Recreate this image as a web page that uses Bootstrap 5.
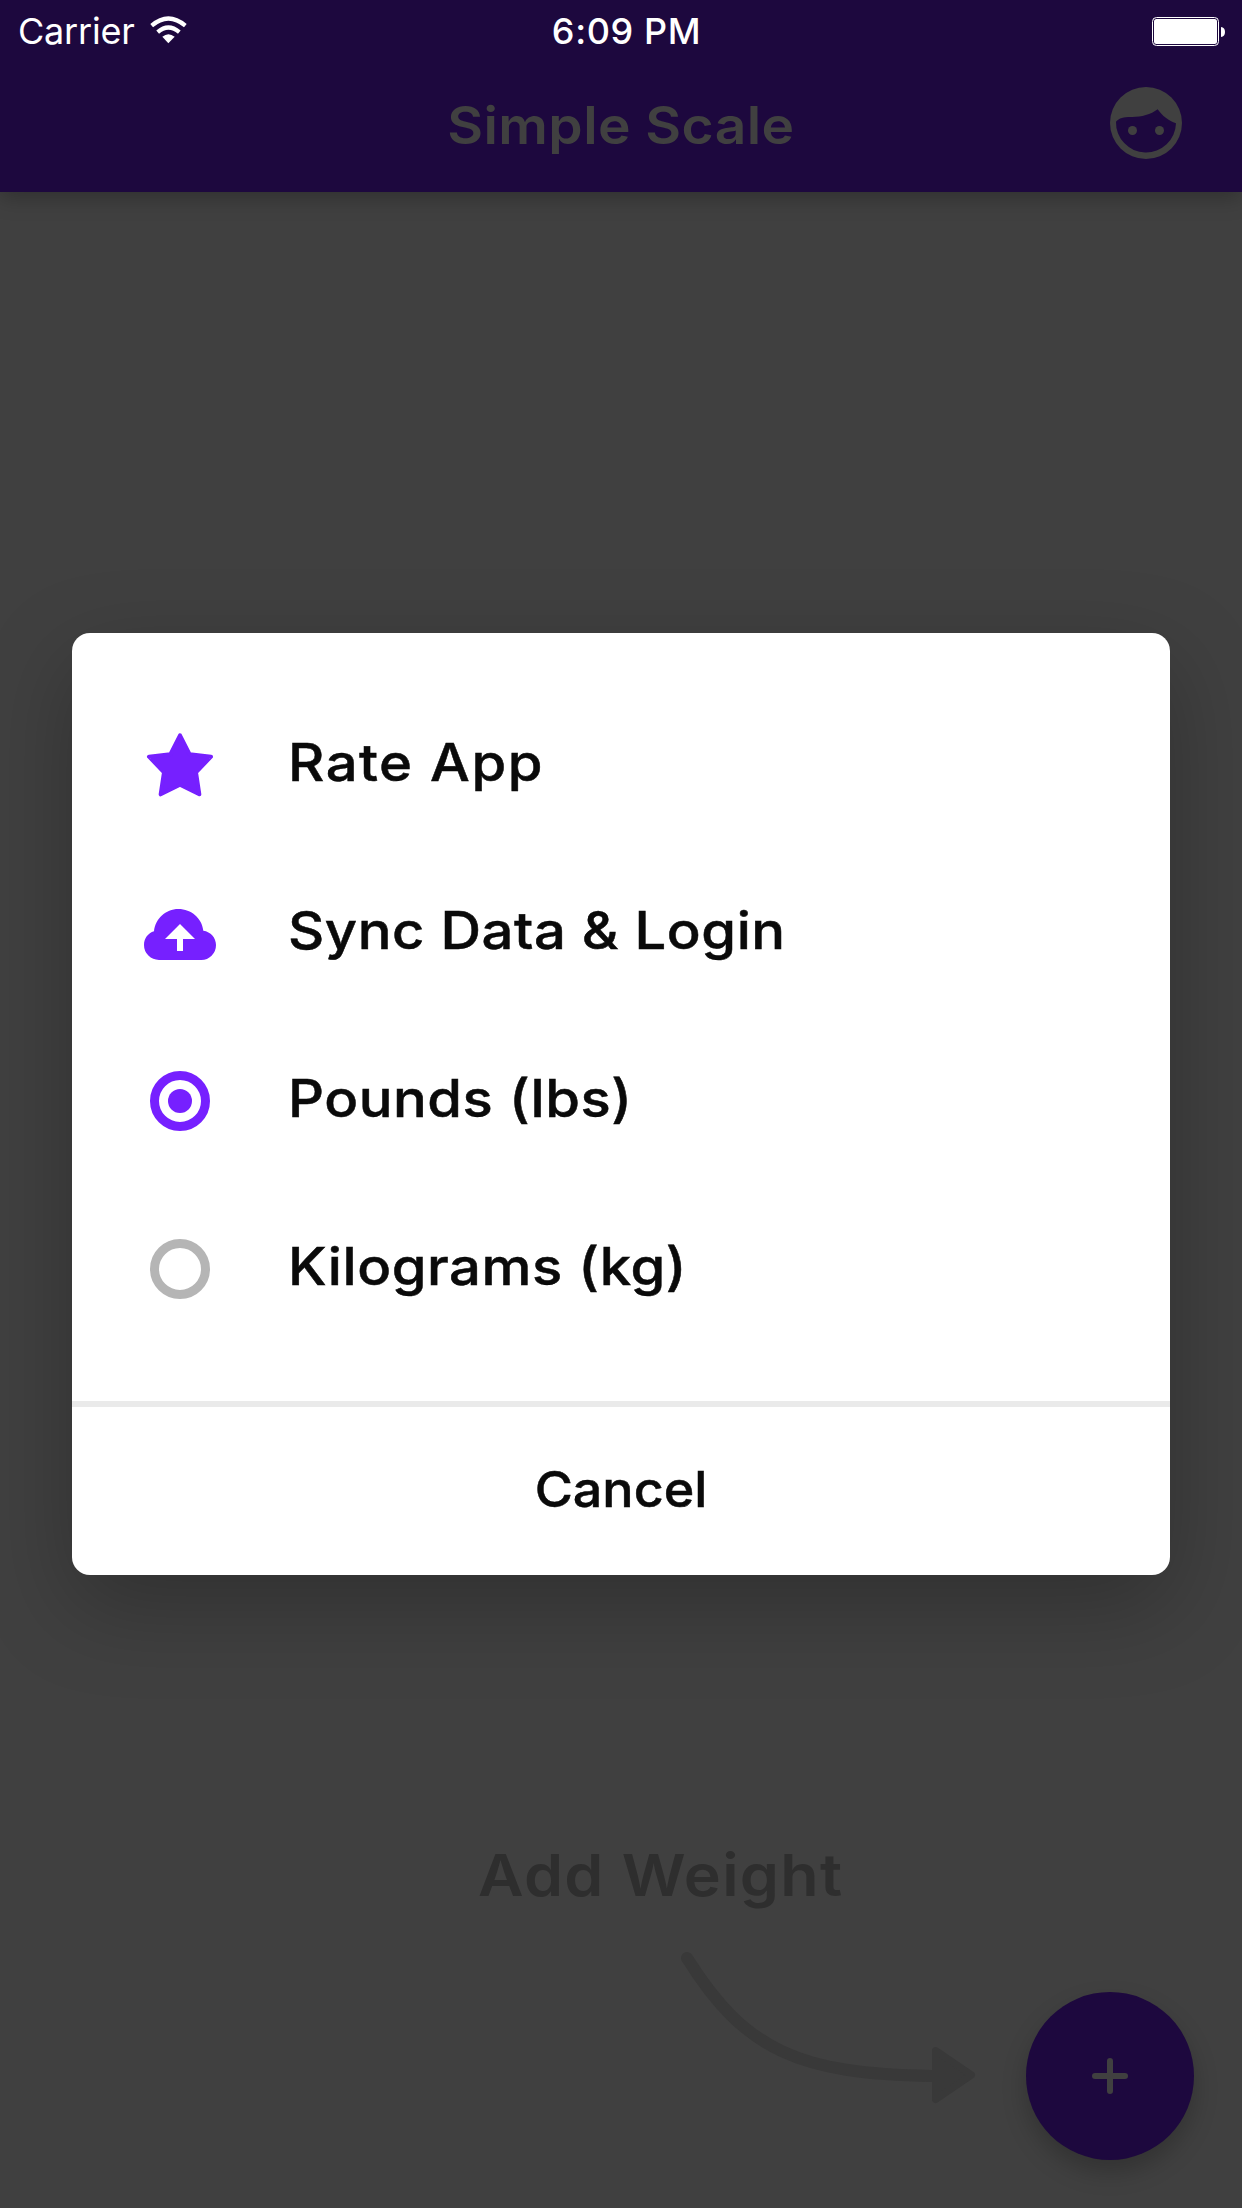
<!DOCTYPE html>
<html lang="en">
<head>
<meta charset="utf-8">
<meta name="viewport" content="width=device-width, initial-scale=1">
<title>Simple Scale</title>
<link href="https://cdn.jsdelivr.net/npm/bootstrap@5.3.0/dist/css/bootstrap.min.css" rel="stylesheet">
<style>
  body { background: #404040; font-family: Inter, Roboto, sans-serif; color: #0a0a0a; }
  svg { display: block; flex-shrink: 0; }
  .screen { width: 1242px; height: 2208px; }
  .label { white-space: nowrap; line-height: 72px; }
  /* Widened letterforms for the app's own headings and labels */
  .wide { transform: scaleX(1.08); transform-origin: left center; -webkit-text-stroke: .5px currentColor; }

  /* Status bar and title */
  .topbar { height: 192px; background: #1d083e; box-shadow: 0 6px 20px rgba(0,0,0,.25); }
  .status { height: 62px; padding: 0 17px 0 18px; font-size: 36px; }
  .side-left { width: 300px; gap: 15px; }
  .side-right { width: 290px; }
  .carrier { letter-spacing: -.2px; }
  .wifi { margin-bottom: 3px; }
  .clock { font-weight: 500; letter-spacing: .6px; }
  .titlebar { height: 130px; padding: 0 60px 2px; color: #404040; }
  .end-slot { width: 72px; }
  .face { margin-top: -6px; }
  .brand { font-size: 52px; font-weight: 600; letter-spacing: .4px; transform: scaleX(1.06); transform-origin: center; -webkit-text-stroke: 0; }

  /* Empty state hint and add button */
  .bottom { padding: 0 48px 48px; gap: 49px; }
  .hint { width: 499px; margin-bottom: 52px; gap: 37px; }
  .hint-text { font-size: 58px; font-weight: 600; letter-spacing: 1.2px; color: #2e2e2e; -webkit-text-stroke: 0; }
  .fab { width: 168px; height: 168px; background: #1d083e; box-shadow: 0 12px 24px rgba(0,0,0,.22); }

  /* Dialog */
  .sheet { width: 1098px; height: 942px; border-radius: 18px; background: #fff; box-shadow: 0 30px 90px rgba(0,0,0,.25); }
  .options { padding: 48px 0; }
  .option { height: 168px; padding: 0 72px; gap: 72px; font-size: 52px; font-weight: 500; letter-spacing: .5px; }
  .option .label { padding-bottom: 5px; }
  .option-rate { letter-spacing: 1.4px; }
  .cancel { height: 174px; padding-bottom: 4px; border-top: 6px solid #eaeaea; font-size: 50px; font-weight: 500; }
  .cancel .label { transform: scaleX(1.04); transform-origin: center; }
</style>
<script src="https://cdn.jsdelivr.net/npm/bootstrap@5.3.0/dist/js/bootstrap.bundle.min.js"></script>
</head>
<body>
<div class="screen position-relative overflow-hidden d-flex flex-column">
  <header class="topbar flex-shrink-0">
    <div class="status d-flex justify-content-between align-items-center text-white">
      <div class="side-left d-flex align-items-center">
        <span class="carrier label">Carrier</span>
        <svg class="wifi" width="37" height="28" viewBox="450 47 111 84">
          <g fill="none" stroke="#fff" stroke-width="12.500">
            <path d="M455 76Q505 33 556 76"/>
            <path d="M473 95.500Q505 67.500 538 95.500"/>
          </g>
          <path d="M487 109Q505 94 524 109L505 129Z" fill="#fff"/>
        </svg>
      </div>
      <span class="clock label">6:09 PM</span>
      <div class="side-right d-flex justify-content-end">
        <svg width="73" height="29" viewBox="0 0 73 29">
          <rect x=".5" y=".5" width="66" height="28" rx="4" fill="none" stroke="#fff"/>
          <rect x="2" y="2" width="63" height="25" rx="2.5" fill="#fff"/>
          <path d="M69 10Q73 10.500 73 15T69 20Z" fill="#fff"/>
        </svg>
      </div>
    </div>
    <div class="titlebar d-flex justify-content-between align-items-center">
      <div class="end-slot"></div>
      <span class="wide brand label">Simple Scale</span>
      <svg class="face" width="72" height="72" viewBox="0 0 216 216" fill="#404040">
        <path fill-rule="evenodd" d="M108 0A108 108 0 1 1 108 216A108 108 0 1 1 108 0ZM18 104C27 93 42 90 61 90C91 91 121 84 143 67C156 86 177 103 198 109A90 90 0 0 1 18 104Z"/>
        <circle cx="67.500" cy="130.500" r="13.500"/><circle cx="148.500" cy="130.500" r="13.500"/>
      </svg>
    </div>
  </header>

  <main class="bottom flex-grow-1 d-flex justify-content-end align-items-end">
    <div class="hint d-flex flex-column">
      <span class="wide hint-text label">Add Weight</span>
      <svg class="align-self-end" width="300" height="160" viewBox="677 1948 300 160">
        <path d="M687 1958C745 2051 800 2074 932 2076" fill="none" stroke="#393939" stroke-width="12" stroke-linecap="round"/>
        <path d="M935.500 2050.500L971.500 2075L935.500 2099.500Z" fill="#393939" stroke="#393939" stroke-width="7" stroke-linejoin="round"/>
      </svg>
    </div>
    <button class="fab btn rounded-circle border-0 p-0 d-flex align-items-center justify-content-center" aria-label="Add weight">
      <svg width="36" height="36" viewBox="0 0 36 36" stroke="#404040" stroke-width="6" stroke-linecap="round"><path d="M18 3V33M3 18H33"/></svg>
    </button>
  </main>

  <div class="position-absolute top-0 start-0 w-100 h-100 d-flex align-items-center justify-content-center">
    <div class="sheet" role="dialog">
      <div class="options">
        <div class="option option-rate d-flex align-items-center">
          <svg width="72" height="72" viewBox="0 0 216 216">
            <path d="M108 19L137 76L201 83L156 130L166 196L108 167L50 196L60 130L15 83L79 76Z" fill="#7620ff" stroke="#7620ff" stroke-width="12" stroke-linejoin="round"/>
          </svg>
          <span class="wide label">Rate App</span>
        </div>
        <div class="option d-flex align-items-center">
          <svg width="72" height="72" viewBox="0 0 216 216">
            <path transform="translate(0 36)" fill="#7620ff" fill-rule="evenodd" d="M45 153A45 45 0 0 1 0 108C0 89 12 72 30 67C34 29 65 0 103 0C142 0 174 28 178 65C200 68 216 86 216 108A44 45 0 0 1 171 153ZM108 45L63 90H99V126H117V90H153Z"/>
          </svg>
          <span class="wide label">Sync Data &amp; Login</span>
        </div>
        <div class="option d-flex align-items-center">
          <svg width="72" height="72" viewBox="0 0 72 72">
            <circle cx="36" cy="36" r="25.500" fill="none" stroke="#7620ff" stroke-width="9"/>
            <circle cx="36" cy="36" r="12" fill="#7620ff"/>
          </svg>
          <span class="wide label">Pounds (lbs)</span>
        </div>
        <div class="option d-flex align-items-center">
          <svg width="72" height="72" viewBox="0 0 72 72">
            <circle cx="36" cy="36" r="25.500" fill="none" stroke="#b5b5b5" stroke-width="9"/>
          </svg>
          <span class="wide label">Kilograms (kg)</span>
        </div>
      </div>
      <div class="cancel d-flex align-items-center justify-content-center"><span class="wide label">Cancel</span></div>
    </div>
  </div>
</div>
</body>
</html>
